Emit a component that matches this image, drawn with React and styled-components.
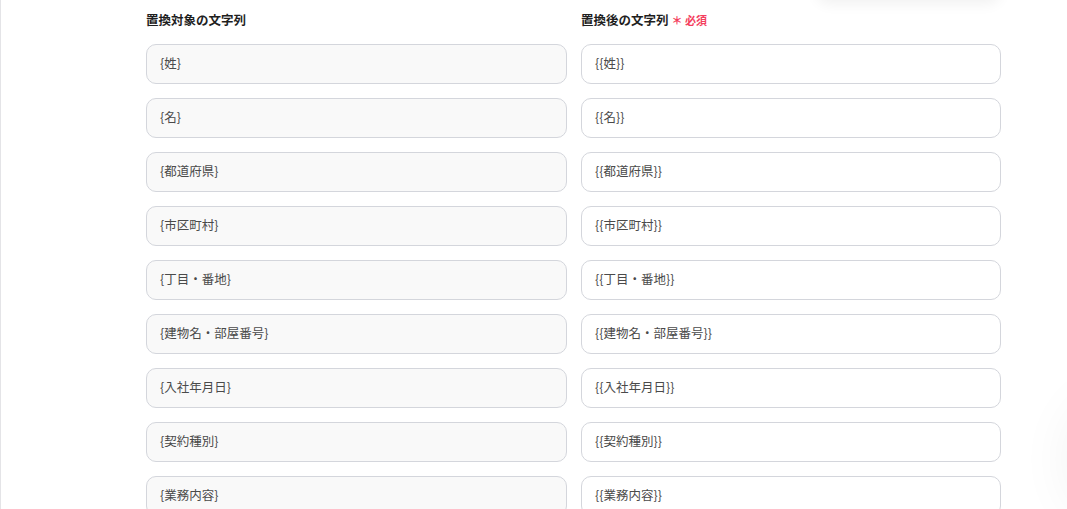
import React from "react";
import styled, { createGlobalStyle } from "styled-components";

const GlobalStyle = createGlobalStyle`
  html, body {
    margin: 0;
    padding: 0;
    background: #ffffff;
    overflow: hidden;
  }
  body {
    font-family: "Noto Sans CJK JP", "Noto Sans", sans-serif;
  }
`;

const Page = styled.div`
  position: relative;
  height: 509px;
  overflow: hidden;
  border-left: 1px solid #e4e4e7;
  background: #fff;
`;

const Popover = styled.div`
  position: absolute;
  top: -60px;
  left: 815px;
  width: 185px;
  height: 60px;
  border-radius: 14px;
  background: #fff;
  box-shadow: 0 4px 14px rgba(0, 0, 0, 0.06);
`;

const Fab = styled.div`
  position: absolute;
  right: -125px;
  bottom: -10px;
  width: 120px;
  height: 120px;
  border-radius: 50%;
  background: #fff;
  box-shadow: 0 0 60px rgba(0, 0, 0, 0.07);
`;

const Form = styled.div`
  padding: 11px 0 0 145px;
`;

const Grid = styled.div`
  display: grid;
  grid-template-columns: 421px 420px;
  column-gap: 14px;
  row-gap: 14px;
`;

const Head = styled.div`
  display: flex;
  align-items: center;
  gap: 3px;
  height: 17px;
  margin-bottom: 2px;
  font-size: 12.5px;
  font-weight: 700;
  color: #1f1f1f;
  line-height: 17px;
`;

const Required = styled.span`
  font-size: 11px;
  font-weight: 700;
  color: #f43f5e;
  margin-top: 1px;
`;

const Field = styled.div`
  box-sizing: border-box;
  height: 40px;
  display: flex;
  align-items: center;
  padding: 0 13px 3px;
  border: 1px solid #d4d6dc;
  border-radius: 10px;
  background: ${(p) => (p.$disabled ? "#f9f9f9" : "#ffffff")};
  font-size: 12.5px;
  color: #4a4a4a;
  white-space: nowrap;
`;

const keys = [
  "姓",
  "名",
  "都道府県",
  "市区町村",
  "丁目・番地",
  "建物名・部屋番号",
  "入社年月日",
  "契約種別",
  "業務内容",
];

export default function App() {
  return (
    <>
      <GlobalStyle />
      <Page>
        <Popover />
        <Fab />
        <Form>
          <Grid>
            <Head>置換対象の文字列</Head>
            <Head>
              置換後の文字列<Required>＊ 必須</Required>
            </Head>
            {keys.map((k) => (
              <React.Fragment key={k}>
                <Field $disabled>{`{${k}}`}</Field>
                <Field>{`{{${k}}}`}</Field>
              </React.Fragment>
            ))}
          </Grid>
        </Form>
      </Page>
    </>
  );
}
